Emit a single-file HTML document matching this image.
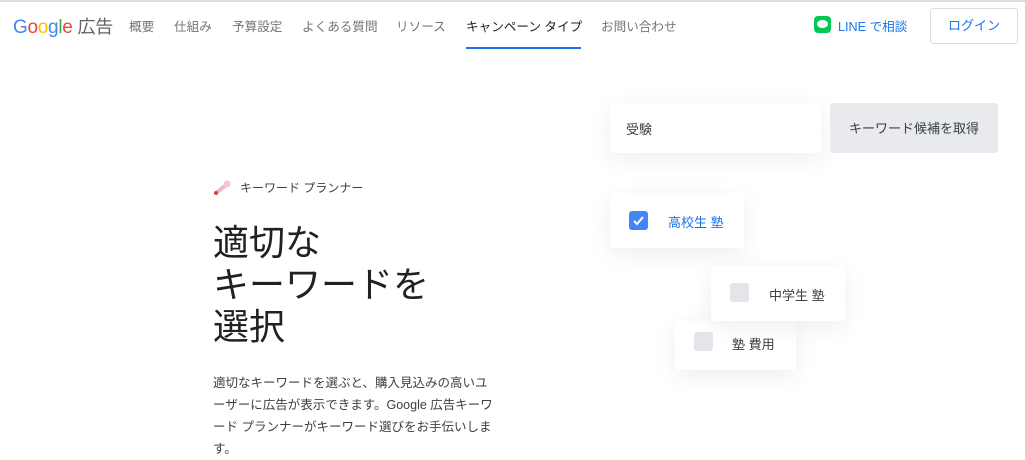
<!DOCTYPE html>
<html><head><meta charset="utf-8"><style>
*{margin:0;padding:0;box-sizing:border-box}
body{width:1025px;height:451px;overflow:hidden;background:#fff;font-family:"Liberation Sans","Noto Sans CJK JP",sans-serif;position:relative;color:#3c4043}
.top{position:absolute;left:0;top:0;width:1025px;height:2px;background:#dadce0}
.nav{position:absolute;top:16px;font-size:12.6px;color:#70757a}
.abs{position:absolute}
.card{position:absolute;background:#fff;border-radius:3px;box-shadow:0 6px 24px rgba(0,0,0,.07)}
.cb{position:absolute;width:19px;height:19px;border-radius:3px;background:#e3e5e9}
</style></head><body>
<div class="top"></div>
<div class="abs" style="left:13px;top:13px;font-size:19px;letter-spacing:-0.3px"><span style="color:#4285f4">G</span><span style="color:#ea4335">o</span><span style="color:#fbbc05">o</span><span style="color:#4285f4">g</span><span style="color:#34a853">l</span><span style="color:#ea4335">e</span> <span style="color:#5f6368;font-size:18px">広告</span></div>
<div class="nav" style="left:129px">概要</div>
<div class="nav" style="left:174px">仕組み</div>
<div class="nav" style="left:232px">予算設定</div>
<div class="nav" style="left:302px">よくある質問</div>
<div class="nav" style="left:396px">リソース</div>
<div class="nav" style="left:466px;color:#202124">キャンペーン タイプ</div>
<div class="abs" style="left:466px;top:47px;width:115px;height:2px;background:#1a73e8"></div>
<div class="nav" style="left:601px">お問い合わせ</div>
<div class="abs" style="left:814px;top:16px;width:17px;height:17px;border-radius:4px;background:#06c755"><div style="position:absolute;left:3px;top:4px;width:11px;height:8px;border-radius:50%;background:#fff"></div></div>
<div class="nav" style="left:838px;color:#1a73e8">LINE で相談</div>
<div class="abs" style="left:930px;top:8px;width:88px;height:36px;border:1px solid #dadce0;border-radius:3px;color:#1a73e8;font-size:13px;text-align:center;line-height:34px">ログイン</div>

<svg class="abs" style="left:212px;top:178px" width="22" height="20" viewBox="0 0 22 20"><path d="M4 15 L14 7" stroke="#f4b6bc" stroke-width="4" stroke-linecap="round"/><circle cx="15" cy="6" r="3.5" fill="#f4c7cb"/><circle cx="4" cy="15" r="2" fill="#d93c4a"/></svg>
<div class="abs" style="left:240px;top:179px;font-size:12px;color:#3c4043">キーワード プランナー</div>
<div class="abs" style="left:213px;top:222px;font-size:36px;line-height:42px;color:#202124">適切な<br>キーワードを<br>選択</div>
<div class="abs" style="left:213px;top:372px;width:285px;font-size:12.5px;line-height:22px;color:#3c4043">適切なキーワードを選ぶと、購入見込みの高いユーザーに広告が表示できます。Google 広告キーワード プランナーがキーワード選びをお手伝いします。</div>

<div class="card" style="left:610px;top:103px;width:211px;height:50px"><div class="abs" style="left:16px;top:16px;font-size:13px;color:#3c4043">受験</div></div>
<div class="abs" style="left:830px;top:103px;width:168px;height:50px;background:#e8eaed;border-radius:3px;font-size:13px;color:#3c4043;text-align:center;line-height:52px">キーワード候補を取得</div>
<div class="card" style="left:610px;top:193px;width:134px;height:55px"><div class="cb" style="left:19px;top:18px;background:#4285f4"><svg width="19" height="19"><path d="M5 10 L8 13 L14 6" stroke="#fff" stroke-width="2" fill="none"/></svg></div><div class="abs" style="left:58px;top:19px;font-size:13px;color:#1a73e8">高校生 塾</div></div>
<div class="card" style="left:711px;top:266px;width:134px;height:55px"><div class="cb" style="left:19px;top:17px"></div><div class="abs" style="left:58px;top:19px;font-size:13px;color:#3c4043">中学生 塾</div></div>
<div class="card" style="left:675px;top:321px;width:121px;height:49px;z-index:-1"></div>
<div class="cb" style="left:694px;top:332px"></div>
<div class="abs" style="left:732px;top:334px;font-size:13px;color:#3c4043">塾 費用</div>
</body></html>
